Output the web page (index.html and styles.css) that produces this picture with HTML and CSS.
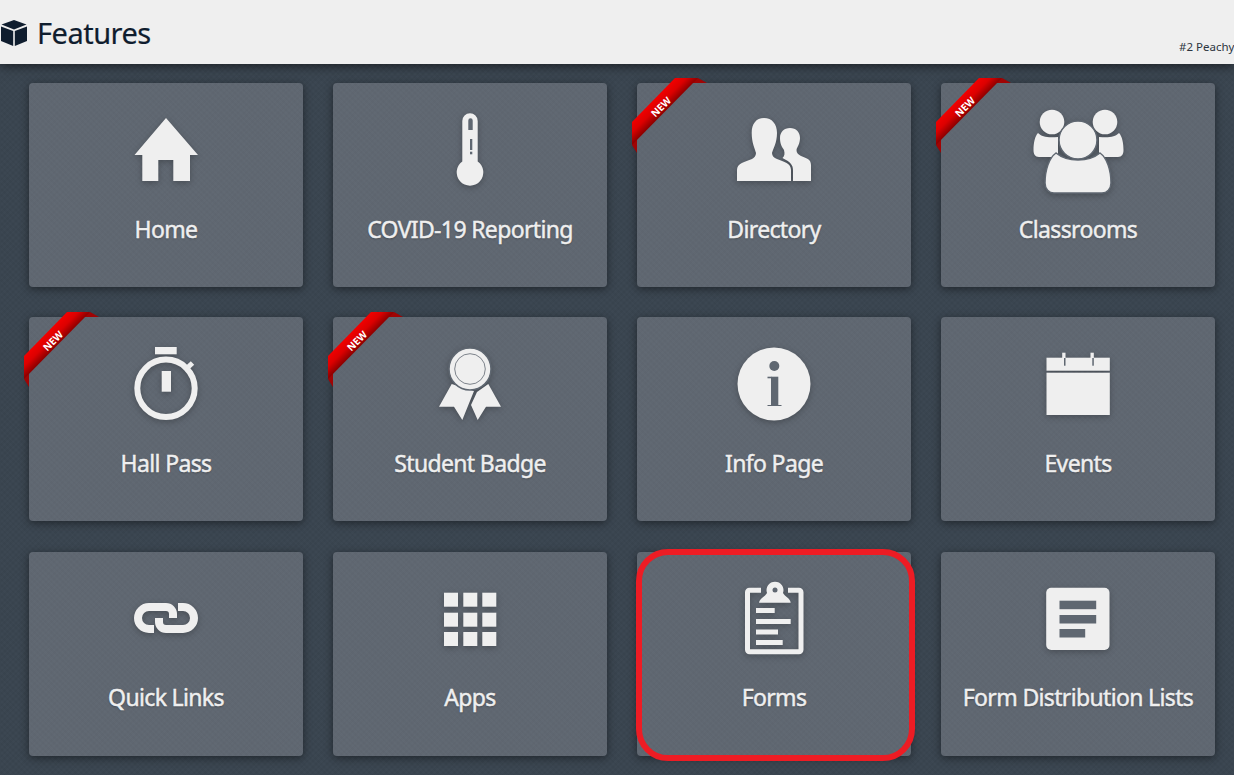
FILE: index.html
```html
<!DOCTYPE html>
<html lang="en">
<head>
    <meta charset="UTF-8">
    <meta name="viewport" content="width=device-width, initial-scale=1.0">
    <title>Features</title>
    <link rel="stylesheet" href="styles.css">
</head>
<body>
    <header class="top-bar">
        <svg class="cube-icon" viewBox="0 0 26 26">
            <path d="M13 0 L25.5 4.6 L13 9.4 L0.5 4.6 Z"/>
            <path d="M0 6.4 L12.2 11 V26 L0 21 Z"/>
            <path d="M26 6.4 L13.8 11 V26 L26 21 Z"/>
        </svg>
        <h1>Features</h1>
        <span class="school-name">#2 Peachy</span>
    </header>

    <main class="feature-grid">
        <a class="tile">
            <svg class="tile-icon" viewBox="0 0 100 100">
                <path d="M50 18 L82 55 H74 V81 H57.3 V60 H42.3 V81 H26.3 V55 H18.5 Z"/>
            </svg>
            <span class="tile-label">Home</span>
        </a>

        <a class="tile">
            <svg class="tile-icon" viewBox="0 0 100 100">
                <path d="M42.3 21 a7.7 7.7 0 0 1 15.4 0 V61.5 a13.3 13.3 0 1 1 -15.4 0 Z"/>
                <path class="cut" d="M48.3 20.5 a2.2 2.2 0 0 1 4.4 0 V30 H48.3 Z"/>
                <rect class="cut" x="50" y="39" width="2.3" height="11"/>
                <rect class="cut" x="50" y="51.7" width="2.3" height="2.6"/>
            </svg>
            <span class="tile-label">COVID-19 Reporting</span>
        </a>

        <a class="tile">
            <svg class="ribbon" viewBox="0 0 80 80"><use href="#new-ribbon"/></svg>
            <svg class="tile-icon" viewBox="0 0 100 100">
                <path d="M40 18 C48 18 53 24 53 33 C53 43 49 49 48 53 C48 56 50 58 53 59 C60 62 67 63 67 70 V81 H13 V70 C13 63 21 62 28 59 C30 58 32 56 32 53 C31 49 27.7 43 27.7 33 C27.7 24 32 18 40 18 Z"/>
                <path d="M66 28 C72 28 76 32 76 38 C76 44 73 47 72.5 50 C72.5 53 74 54 77 56 C82 58 87 59 87 65 V81 H69 V70 C69 65 66 62 62 60 L58.5 58 C60.5 56 61 54 60 50 C58 47 56 44 56 38 C56 32 60 28 66 28 Z"/>
            </svg>
            <span class="tile-label">Directory</span>
        </a>

        <a class="tile">
            <svg class="ribbon" viewBox="0 0 80 80"><use href="#new-ribbon"/></svg>
            <svg class="tile-icon" viewBox="0 0 100 100">
                <circle cx="24" cy="22" r="12.3"/>
                <circle cx="77" cy="22" r="12.3"/>
                <path d="M10 33 C14 37 20 38 30 37 V57 H11 C7 57 5.5 54 5.5 50 C5.5 43 7 36 10 33 Z"/>
                <path d="M91 33 C87 37 81 38 71 37 V57 H90 C94 57 95.5 54 95.5 50 C95.5 43 94 36 91 33 Z"/>
                <path class="gap" d="M28 53 C34 58 42 60 50 60 C58 60 66 58 72 53 C79 58 83 70 83 83 C83 89 79 93 74 93 H26 C21 93 17 89 17 83 C17 70 21 58 28 53 Z"/>
                <circle class="gap" cx="50" cy="40" r="19"/>
            </svg>
            <span class="tile-label">Classrooms</span>
        </a>

        <a class="tile">
            <svg class="ribbon" viewBox="0 0 80 80"><use href="#new-ribbon"/></svg>
            <svg class="tile-icon" viewBox="0 0 100 100">
                <rect x="39" y="13" width="21.7" height="7.3"/>
                <circle class="line" cx="50" cy="54.3" r="28.7"/>
                <rect x="45.7" y="37" width="9.3" height="20.7"/>
                <path class="line thin" d="M70 35 L76.5 29"/>
            </svg>
            <span class="tile-label">Hall Pass</span>
        </a>

        <a class="tile">
            <svg class="ribbon" viewBox="0 0 80 80"><use href="#new-ribbon"/></svg>
            <svg class="tile-icon" viewBox="0 0 100 100">
                <path d="M31.7 50 L19 72.7 H34 L42.3 86 L54 57 Z"/>
                <path d="M68.3 50 L81 72.7 H66 L57.7 86 L51 71 L57 58 Z"/>
                <circle class="gap" cx="50" cy="35" r="21"/>
                <circle class="ring" cx="50" cy="35" r="15.3"/>
            </svg>
            <span class="tile-label">Student Badge</span>
        </a>

        <a class="tile">
            <svg class="tile-icon" viewBox="0 0 100 100">
                <circle cx="50" cy="50" r="36.5"/>
                <circle class="cut" cx="50.3" cy="32" r="5"/>
                <rect class="cut" x="47" y="42.7" width="7.3" height="29"/>
                <rect class="cut" x="43.5" y="42.7" width="4" height="1.6"/>
                <rect class="cut" x="43.5" y="71" width="14" height="1"/>
            </svg>
            <span class="tile-label">Info Page</span>
        </a>

        <a class="tile">
            <svg class="tile-icon" viewBox="0 0 100 100">
                <rect x="18.5" y="23.7" width="63.3" height="13"/>
                <rect x="18.5" y="38.7" width="63.3" height="42.3"/>
                <rect x="34.2" y="18.7" width="3.3" height="13"/>
                <rect x="62.5" y="18.7" width="3.3" height="13"/>
                <rect class="cut" x="36" y="24" width="1.5" height="7.7"/>
                <rect class="cut" x="64.3" y="24" width="1.5" height="7.7"/>
            </svg>
            <span class="tile-label">Events</span>
        </a>

        <a class="tile">
            <svg class="tile-icon" viewBox="0 0 100 100">
                <path class="line link" d="M38 60 H33 A11 11 0 0 1 33 38 H50 A7 7 0 0 1 57 45 V49"/>
                <path class="line link" d="M62 38 H67 A11 11 0 0 1 67 60 H50 A7 7 0 0 1 43 53 V49"/>
            </svg>
            <span class="tile-label">Quick Links</span>
        </a>

        <a class="tile">
            <svg class="tile-icon" viewBox="0 0 100 100">
                <rect x="24" y="23.7" width="14" height="14"/>
                <rect x="43.3" y="23.7" width="14" height="14"/>
                <rect x="62.3" y="23.7" width="14" height="14"/>
                <rect x="24" y="43.7" width="14" height="14"/>
                <rect x="43.3" y="43.7" width="14" height="14"/>
                <rect x="62.3" y="43.7" width="14" height="14"/>
                <rect x="24" y="63" width="14" height="14"/>
                <rect x="43.3" y="63" width="14" height="14"/>
                <rect x="62.3" y="63" width="14" height="14"/>
            </svg>
            <span class="tile-label">Apps</span>
        </a>

        <a class="tile">
            <span class="highlight"></span>
            <svg class="tile-icon" viewBox="0 0 100 100">
                <path class="line board" d="M37 21.2 H25.5 a2 2 0 0 0 -2 2 V80.7 a2 2 0 0 0 2 2 H75 a2 2 0 0 0 2 -2 V23.2 a2 2 0 0 0 -2 -2 H64"/>
                <path d="M35 33.7 C36 29 41 28 43 24 A8.5 8.5 0 1 1 59 24 C61 28 66 29 66.7 33.7 Z"/>
                <circle class="cut" cx="51" cy="21" r="2.5"/>
                <rect x="32" y="39" width="18.7" height="5"/>
                <rect x="32" y="50" width="34.7" height="5"/>
                <rect x="32" y="60.5" width="22" height="5"/>
                <rect x="32" y="71" width="26.7" height="5"/>
            </svg>
            <span class="tile-label">Forms</span>
        </a>

        <a class="tile">
            <svg class="tile-icon" viewBox="0 0 100 100">
                <rect x="18.2" y="18.7" width="63.3" height="62.3" rx="5"/>
                <rect class="cut" x="31.5" y="31.7" width="36.7" height="8.5"/>
                <rect class="cut" x="31.5" y="46" width="36.7" height="8.5"/>
                <rect class="cut" x="31.5" y="60" width="25.7" height="8.5"/>
            </svg>
            <span class="tile-label">Form Distribution Lists</span>
        </a>
    </main>

    <!-- shared corner ribbon -->
    <svg class="defs" width="0" height="0">
        <defs>
            <linearGradient id="ribbon-red" gradientUnits="userSpaceOnUse" x1="21.5" y1="21.5" x2="33" y2="33">
                <stop offset="0" stop-color="#f20000"/>
                <stop offset="0.5" stop-color="#dc0000"/>
                <stop offset="1" stop-color="#8f0000"/>
            </linearGradient>
            <g id="new-ribbon">
                <path d="M66 0 L75 5 L57 5 Z" fill="#a00404"/>
                <path d="M0 67 L5 75 L5 57 Z" fill="#a00404"/>
                <path d="M43 0 H66 L0 67 V44 Z" fill="url(#ribbon-red)"/>
                <text x="29" y="32.5" transform="rotate(-45 29 29)" text-anchor="middle" fill="#fff" font-family="Noto Sans, sans-serif" font-weight="700" font-size="10">NEW</text>
            </g>
        </defs>
    </svg>
</body>
</html>
```

FILE: styles.css
```css
* {
    box-sizing: border-box;
}

html, body {
    height: 100%;
}

body {
    margin: 0;
    overflow: hidden;
    font-family: "Noto Sans", sans-serif;
    background-color: #3a4550;
    background-image:
        repeating-linear-gradient(45deg, rgba(255, 255, 255, 0.012) 0 2px, transparent 2px 4px),
        repeating-linear-gradient(-45deg, rgba(0, 0, 0, 0.03) 0 2px, transparent 2px 4px);
}

.top-bar {
    display: flex;
    height: 64px;
    padding-left: 1px;
    background: #efefef;
    box-shadow: 0 2px 10px rgba(0, 0, 0, 0.55);
    color: #0f1d2e;
    position: relative;
}

.cube-icon {
    width: 26px;
    height: 26px;
    margin-top: 20px;
    fill: #0f1d2e;
}

h1 {
    margin: 13px 0 0 10px;
    font-size: 29px;
    font-weight: 400;
    line-height: 40px;
    letter-spacing: -0.5px;
    -webkit-text-stroke: 0.2px #0f1d2e;
}

.school-name {
    margin-left: auto;
    width: 55px;
    margin-top: 39px;
    overflow: hidden;
    white-space: nowrap;
    font-size: 11.5px;
    line-height: 16px;
    color: #2c3540;
}

.feature-grid {
    display: grid;
    grid-template-columns: repeat(4, 274px);
    grid-auto-rows: 204px;
    gap: 30.4px 30px;
    padding: 19px 0 0 29px;
}

.tile {
    position: relative;
    display: flex;
    flex-direction: column;
    align-items: center;
    padding-top: 17px;
    border-radius: 4px;
    background-color: #5f6771;
    background-image:
        repeating-linear-gradient(45deg, rgba(255, 255, 255, 0.01) 0 2px, transparent 2px 4px),
        repeating-linear-gradient(-45deg, rgba(0, 0, 0, 0.015) 0 2px, transparent 2px 4px);
    box-shadow: 0 2px 9px rgba(0, 0, 0, 0.45);
}

.tile-icon {
    width: 100px;
    height: 100px;
    overflow: visible;
    fill: #efefef;
    filter: drop-shadow(0 2px 3px rgba(0, 0, 0, 0.25));
}

.tile-icon .cut {
    fill: #5f6771;
}

.tile-icon .gap {
    stroke: #5f6771;
    stroke-width: 1.5;
}

.tile-icon .ring {
    fill: none;
    stroke: #5f6771;
    stroke-width: 0.8;
}

.tile-icon .line {
    fill: none;
    stroke: #efefef;
    stroke-width: 6;
}

.tile-icon .thin {
    stroke-width: 5;
}

.tile-icon .link {
    stroke-width: 8;
}

.tile-icon .board {
    stroke-width: 5;
}

.tile-label {
    margin-top: 12.5px;
    font-size: 23px;
    line-height: 32px;
    letter-spacing: -0.65px;
    color: #efefef;
    -webkit-text-stroke: 0.45px #efefef;
    text-shadow: 0 1px 2px rgba(0, 0, 0, 0.3);
    white-space: nowrap;
}

.ribbon {
    position: absolute;
    left: -5px;
    top: -5px;
    width: 80px;
    height: 80px;
    overflow: visible;
}

.highlight {
    position: absolute;
    left: -1px;
    top: -3px;
    right: -4px;
    bottom: -5px;
    border: 6px solid #ed1c24;
    border-radius: 32px;
    z-index: 1;
}

.defs {
    position: absolute;
}
```
